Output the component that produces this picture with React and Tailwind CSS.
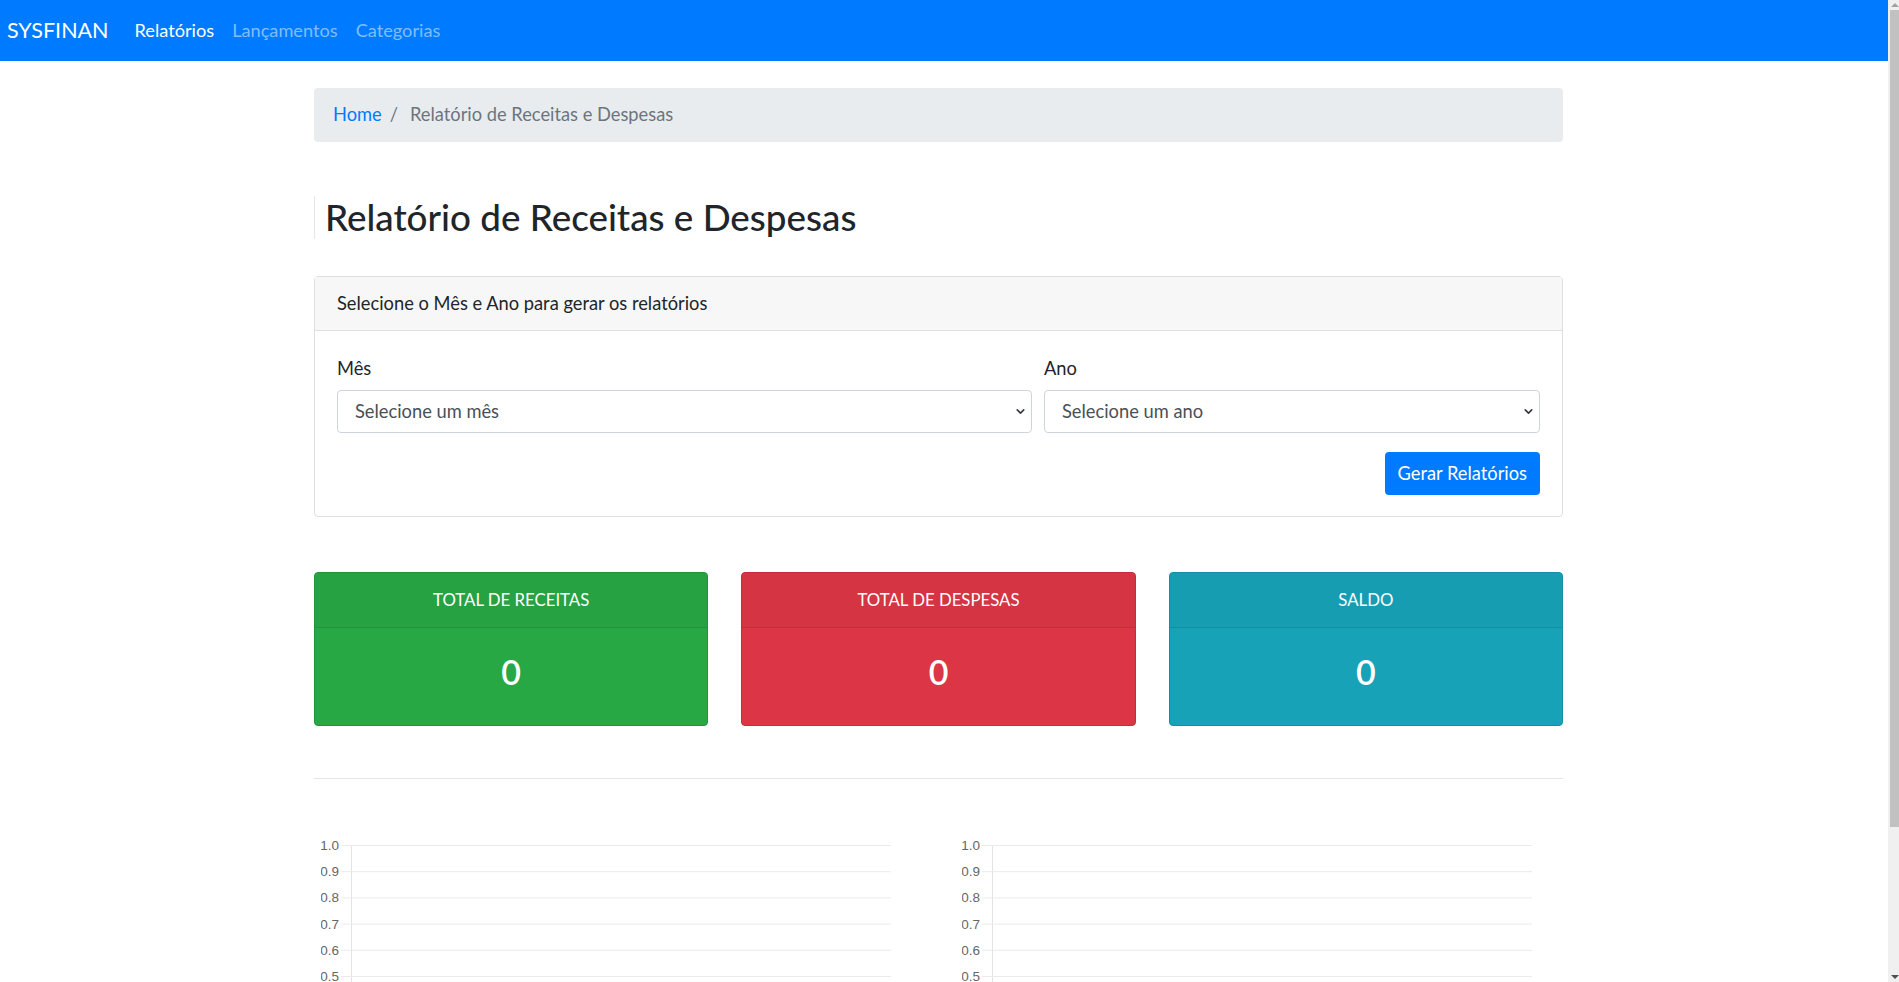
import { ChevronDown } from 'lucide-react';

const ticks = ['1.0', '0.9', '0.8', '0.7', '0.6', '0.5'];

function EmptyChart() {
    return (
        <svg width="570" height="152" className="block">
            <line x1="30.5" y1="14" x2="30.5" y2="152" stroke="#e3e3e3" strokeWidth="1" />
            {ticks.map((t, i) => {
                const y = 14.5 + i * 26.2;
                return (
                    <g key={t}>
                        <line x1="20" y1={y} x2="570" y2={y} stroke="#ebebeb" strokeWidth="1" />
                        <text
                            x="18"
                            y={y + 4.5}
                            textAnchor="end"
                            fontSize="13.5"
                            fill="#666666"
                            fontFamily="'Liberation Sans', Arial, sans-serif"
                        >
                            {t}
                        </text>
                    </g>
                );
            })}
        </svg>
    );
}

function StatCard({ title, bg, head, line }) {
    return (
        <div className={`rounded-[4px] border ${line} ${bg} text-white`}>
            <div className={`h-[55px] flex items-center justify-center border-b ${line} ${head} text-[16.8px]`}>
                {title}
            </div>
            <div className="px-[22px] pt-[23px] pb-[24px] text-center">
                <div className="text-[34px] leading-[42px] font-semibold mb-[8px]">0</div>
            </div>
        </div>
    );
}

function FakeSelect({ label, placeholder, className }) {
    return (
        <div className={className}>
            <div className="text-[18.3px] leading-[26px] text-[#212529] mb-[9px]">{label}</div>
            <div className="h-[43px] rounded-[4px] border border-[#ced4da] bg-white flex items-center justify-between pl-[17px] pr-[4px] text-[18.3px] text-[#495057]">
                <span>{placeholder}</span>
                <ChevronDown size={13} strokeWidth={3} className="text-[#343a40]" />
            </div>
        </div>
    );
}

export default function App() {
    return (
        <div className="flex h-screen w-full overflow-hidden bg-white" style={{ fontFamily: "Lato, 'Noto Sans', sans-serif" }}>
            <div className="flex-1 min-w-0 flex flex-col">
                <nav className="h-[61px] bg-[#007bff] flex items-center pl-[7px] shrink-0">
                    <span className="text-[21.5px] text-white mr-[17px]">SYSFINAN</span>
                    <a className="px-[9px] text-[18.2px] text-white">Relatórios</a>
                    <a className="px-[9px] text-[18.2px] text-[#80bdff]">Lançamentos</a>
                    <a className="px-[9px] text-[18.2px] text-[#80bdff]">Categorias</a>
                </nav>

                <main className="ml-[314px] w-[1249px]">
                    {/* breadcrumb */}
                    <div className="mt-[27px] h-[54px] rounded-[4px] bg-[#e9ecef] flex items-center px-[19px] text-[18.3px]">
                        <span className="text-[#007bff]">Home</span>
                        <span className="pl-[8px] pr-[12px] text-[#6c757d]">/</span>
                        <span className="text-[#6c757d]">Relatório de Receitas e Despesas</span>
                    </div>

                    <h2 className="mt-[54px] h-[43px] border-l border-[#e6e6e6] pl-[10px] text-[36.8px] leading-[43px] font-medium text-[#212529]">
                        Relatório de Receitas e Despesas
                    </h2>

                    {/* filtro */}
                    <div className="mt-[37px] rounded-[4px] border border-[#dfdfdf]">
                        <div className="h-[54px] flex items-center px-[22px] bg-[#f7f7f7] border-b border-[#dfdfdf] text-[18.3px] text-[#212529]">
                            Selecione o Mês e Ano para gerar os relatórios
                        </div>
                        <div className="px-[22px] pt-[24px] pb-[21px]">
                            <div className="flex gap-[12px] mb-[19px]">
                                <FakeSelect label="Mês" placeholder="Selecione um mês" className="w-[695px]" />
                                <FakeSelect label="Ano" placeholder="Selecione um ano" className="flex-1" />
                            </div>
                            <div className="flex justify-end">
                                <button className="h-[43px] px-[13px] rounded-[4px] bg-[#007bff] text-white text-[18.3px]">
                                    Gerar Relatórios
                                </button>
                            </div>
                        </div>
                    </div>

                    {/* totais */}
                    <div className="mt-[55px] grid grid-cols-3 gap-x-[33px]">
                        <StatCard title="TOTAL DE RECEITAS" bg="bg-[#28a745]" head="bg-[#27a243]" line="border-[#23923c]" />
                        <StatCard title="TOTAL DE DESPESAS" bg="bg-[#dc3545]" head="bg-[#d53443]" line="border-[#c12f3c]" />
                        <StatCard title="SALDO" bg="bg-[#17a2b8]" head="bg-[#169db2]" line="border-[#148ea1]" />
                    </div>

                    <hr className="mt-[52px] border-t border-[#e5e5e5]" />

                    {/* graficos */}
                    <div className="mt-[52px] flex">
                        <div className="ml-[7px]">
                            <EmptyChart />
                        </div>
                        <div className="ml-[71px]">
                            <EmptyChart />
                        </div>
                    </div>
                </main>
            </div>

            {/* barra de rolagem */}
            <div className="w-[11px] shrink-0 bg-[#f0f0f0] flex flex-col items-end">
                <div className="h-[10px] w-[9px] flex items-center justify-center">
                    <div className="w-0 h-0 border-l-[4px] border-r-[4px] border-b-[4px] border-l-transparent border-r-transparent border-b-[#a3a3a3]" />
                </div>
                <div className="w-[9px] h-[817px] bg-[#c1c1c1]" />
                <div className="flex-1" />
                <div className="h-[10px] w-[9px] flex items-center justify-center">
                    <div className="w-0 h-0 border-l-[4px] border-r-[4px] border-t-[4px] border-l-transparent border-r-transparent border-t-[#505050]" />
                </div>
            </div>
        </div>
    );
}
